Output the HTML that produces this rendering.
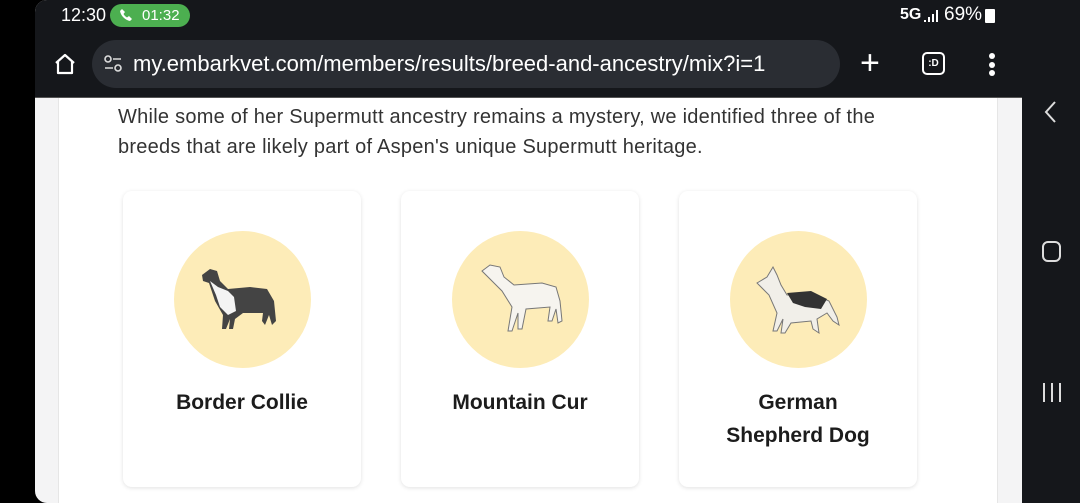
<!DOCTYPE html>
<html><head><style>
*{margin:0;padding:0;box-sizing:border-box}
body{width:1080px;height:503px;background:#000;position:relative;overflow:hidden;font-family:"Liberation Sans",sans-serif}
.screen{position:absolute;left:35px;top:0;width:987px;height:503px;background:#f4f4f5;border-radius:12px 0 0 12px;overflow:hidden}
.top{position:absolute;left:0;top:0;width:987px;height:98px;background:#15171b;border-bottom:1px solid #555}
.nav{position:absolute;left:1022px;top:0;width:58px;height:503px;background:#15171b}
.content{position:absolute;left:23px;top:98px;width:940px;height:405px;background:#fff;border-left:1px solid #e6e6e6;border-right:1px solid #e6e6e6}
.p{position:absolute;left:118px;top:103px;font-size:20px;line-height:29.5px;color:#333;letter-spacing:0.25px;white-space:nowrap}
.card{position:absolute;top:191px;width:238px;height:296px;background:#fff;border-radius:9px;box-shadow:0 1px 4px rgba(0,0,0,.12)}
.circ{position:absolute;left:51px;top:40px;width:137px;height:137px;border-radius:50%;background:#fdecb8}
.name{position:absolute;left:0;width:238px;top:195px;text-align:center;font-weight:bold;font-size:21px;line-height:33px;color:#1c1c1c}
</style></head><body>
<div class="screen">
<div class="top">
 <div style="position:absolute;left:26px;top:5px;color:#fff;font-size:18px">12:30</div>
 <div style="position:absolute;left:75px;top:4px;width:80px;height:23px;background:#4caf50;border-radius:12px;color:#fff;font-size:15px;line-height:23px;padding-left:32px">01:32</div>
 <svg style="position:absolute;left:84px;top:8px" width="14" height="14" viewBox="0 0 14 14"><path d="M3 1l3 3-1.5 2a8 8 0 0 0 3.5 3.5L10 8l3 3-2 2C6 12 2 8 1 3z" fill="#fff"/></svg>
 <div style="position:absolute;left:865px;top:6px;color:#fff;font-size:16px;font-weight:bold">5G</div>
 <div style="position:absolute;left:889px;top:9px;width:14px;height:13px">
  <div style="position:absolute;left:0;bottom:0;width:2px;height:2px;background:#fff"></div><div style="position:absolute;left:4px;bottom:0;width:2px;height:5px;background:#fff"></div><div style="position:absolute;left:8px;bottom:0;width:2px;height:8px;background:#fff"></div><div style="position:absolute;left:12px;bottom:0;width:2px;height:12px;background:#fff"></div></div>
 <div style="position:absolute;left:909px;top:4px;color:#fff;font-size:19px">69%</div>
 <div style="position:absolute;left:950px;top:9px;width:10px;height:14px;background:#fff;border-radius:1px"></div>
 <svg style="position:absolute;left:18px;top:52px" width="24" height="24" viewBox="0 0 24 24"><path d="M3 11L12 3l9 8M5 9v12h14V9" fill="none" stroke="#fff" stroke-width="2.2" stroke-linejoin="round"/></svg>
 <div style="position:absolute;left:57px;top:40px;width:748px;height:48px;background:#2a2d33;border-radius:24px"></div>
 <svg style="position:absolute;left:68px;top:55px" width="20" height="18" viewBox="0 0 20 18"><circle cx="5" cy="4" r="3" fill="none" stroke="#ddd" stroke-width="1.6"/><path d="M10 4h8M2 13h8" stroke="#ddd" stroke-width="1.6"/><circle cx="15" cy="13" r="3" fill="none" stroke="#ddd" stroke-width="1.6"/></svg>
 <div style="position:absolute;left:98px;top:51px;color:#fff;font-size:22px">my.embarkvet.com/members/results/breed-and-ancestry/mix?i=1</div>
 <div style="position:absolute;left:825px;top:44px;color:#fff;font-size:34px;font-weight:300">+</div>
 <div style="position:absolute;left:887px;top:52px;width:23px;height:23px;border:2px solid #fff;border-radius:5px;color:#fff;font-size:10px;font-weight:bold;text-align:center;line-height:19px">:D</div>
 <div style="position:absolute;left:954px;top:53px;width:6px">
  <div style="width:6px;height:6px;border-radius:3px;background:#fff;margin-bottom:2.5px"></div><div style="width:6px;height:6px;border-radius:3px;background:#fff;margin-bottom:2.5px"></div><div style="width:6px;height:6px;border-radius:3px;background:#fff"></div></div>
</div>
<div class="content"></div>
</div>
<div class="p">While some of her Supermutt ancestry remains a mystery, we identified three of the<br>breeds that are likely part of Aspen's unique Supermutt heritage.</div>

<div class="card" style="left:123px"><div class="circ"></div>
<svg style="position:absolute;left:69px;top:70px" width="100" height="80" viewBox="0 0 100 80"><path d="M10 14l8-6 7 2 3 10 8 8 22-2 17 2 7 12 2 20-4 4-3-10-4 10-3-4 1-8-20 0-8 6-2 10-4 0 1-10-4 10h-4l1-14-8-14-6-18-6-2z" fill="#444"/><path d="M18 20l8 6 10 4 6 6 2 14-8 4-8-8-4-12z" fill="#f4f4f4"/></svg>
<div class="name">Border Collie</div></div>

<div class="card" style="left:401px"><div class="circ"></div>
<svg style="position:absolute;left:76px;top:68px" width="90" height="80" viewBox="0 0 90 80"><path d="M5 12l8-6 10 2 4 10 10 8 28-2 14 4 4 14 2 20-4 2-2-14-4 12-4 0 2-14-24 2-4 20-4 0 0-16-6 18-4 0 4-24-10-16-8-8z" fill="#f6f4ef" stroke="#777" stroke-width="1"/></svg>
<div class="name">Mountain Cur</div></div>

<div class="card" style="left:679px"><div class="circ"></div>
<svg style="position:absolute;left:74px;top:72px" width="90" height="72" viewBox="0 0 90 72"><path d="M4 20l10-6 6-10 4 8 4 10 6 10 24-2 18 8 8 16 2 8-6-4-6-8-10 6 2 14-6-4-2-8-20 2-6 10-4 0 2-14-6 12-4 0 4-18-8-18z" fill="#f1efe9" stroke="#777" stroke-width="1"/><path d="M34 30l24-2 16 8-6 10-16-2-12-4z" fill="#333"/></svg>
<div class="name">German<br>Shepherd Dog</div></div>

<div class="nav">
 <svg style="position:absolute;left:21px;top:100px" width="14" height="24" viewBox="0 0 14 24"><path d="M12 2L3 12l9 10" fill="none" stroke="#ddd" stroke-width="2"/></svg>
 <div style="position:absolute;left:20px;top:241px;width:19px;height:21px;border:2px solid #ddd;border-radius:6px"></div>
 <div style="position:absolute;left:21px;top:383px;width:18px;height:19px;border-left:2px solid #ddd;border-right:2px solid #ddd"><div style="margin-left:6px;width:2px;height:19px;background:#ddd"></div></div>
</div>
</body></html>
